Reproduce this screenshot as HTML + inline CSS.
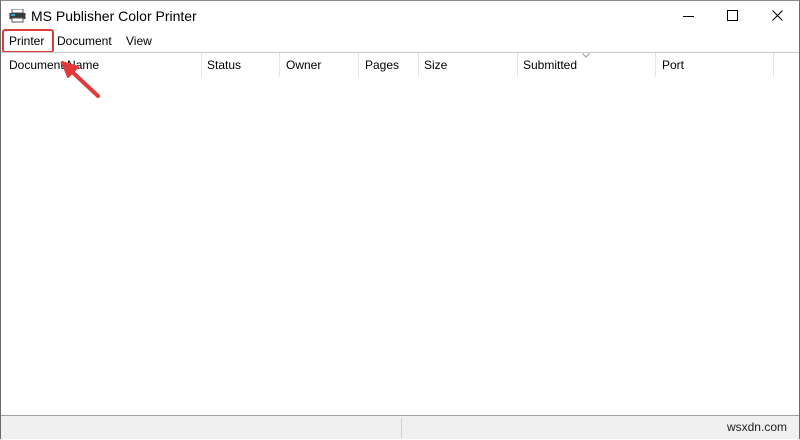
<!DOCTYPE html>
<html><head><meta charset="utf-8"><style>
html,body{margin:0;padding:0;width:800px;height:440px;overflow:hidden;background:#fff;font-family:"Liberation Sans",sans-serif;font-size:12px;color:#000}
.win{position:absolute;left:0;top:0;width:798px;height:437px;border:1px solid #6a6a6a;border-top:1px solid #8a8a8a;background:#fff}
.t{position:absolute;white-space:nowrap}
.hdr{position:absolute;top:51px;left:0;width:798px;height:25px;border-top:1px solid #c8c8c8}
.col{position:absolute;top:52px;height:24px;border-left:1px solid #e5e5e5}
.status{position:absolute;left:0;top:414px;width:798px;height:23px;background:#f0f0f0;border-top:1px solid #a0a0a0}
</style></head><body>
<div class="win">
<svg style="position:absolute;left:8px;top:8px" width="17" height="14" viewBox="0 0 17 14">
<rect x="3" y="0" width="11" height="4" fill="#fff" stroke="#555"/>
<rect x="0.5" y="4" width="16" height="6" fill="#3a3a3a"/>
<rect x="2" y="5" width="4" height="2" fill="#2aa8d8"/>
<rect x="3" y="9" width="11" height="4" fill="#fff" stroke="#555"/>
</svg>
<div class="t" style="left:30px;top:7px;font-size:14px">MS Publisher Color Printer</div>
<div style="position:absolute;left:682px;top:15px;width:11px;height:1px;background:#000"></div>
<div style="position:absolute;left:726px;top:9px;width:9px;height:9px;border:1px solid #000"></div>
<svg style="position:absolute;left:771px;top:9px" width="11" height="11"><path d="M0.5 0.5L10.5 10.5M10.5 0.5L0.5 10.5" stroke="#000" stroke-width="1.1"/></svg>
<div class="t" style="left:8px;top:33px">Printer</div>
<div class="t" style="left:56px;top:33px">Document</div>
<div class="t" style="left:125px;top:33px">View</div>
<div style="position:absolute;left:1px;top:28px;width:48px;height:20px;border:2.5px solid #e03a3a;border-radius:3px"></div>
<div class="hdr"></div>
<div class="col" style="left:200px"></div><div class="col" style="left:278px"></div>
<div class="col" style="left:357px"></div><div class="col" style="left:417px"></div>
<div class="col" style="left:516px"></div><div class="col" style="left:654px"></div>
<div class="col" style="left:772px"></div>
<div class="t" style="left:8px;top:57px">Document Name</div>
<div class="t" style="left:206px;top:57px">Status</div>
<div class="t" style="left:285px;top:57px">Owner</div>
<div class="t" style="left:364px;top:57px">Pages</div>
<div class="t" style="left:423px;top:57px">Size</div>
<div class="t" style="left:522px;top:57px">Submitted</div>
<div class="t" style="left:661px;top:57px">Port</div>
<svg style="position:absolute;left:581px;top:52px" width="8" height="5"><path d="M0.5 0.5L4 4L7.5 0.5" stroke="#999" fill="none"/></svg>
<svg style="position:absolute;left:55px;top:55px" width="50" height="45"><path d="M42 40L12 12" stroke="#e03a3a" stroke-width="4" stroke-linecap="round"/><path d="M6 6L22 11L12 21Z" fill="#e03a3a" stroke="#e03a3a" stroke-width="2" stroke-linejoin="round"/></svg>
<div class="status"><div style="position:absolute;left:400px;top:2px;width:1px;height:20px;background:#d0d0d0"></div>
<div class="t" style="right:12px;top:4px;font-size:12px;color:#222">wsxdn.com</div></div>
</div>
</body></html>
